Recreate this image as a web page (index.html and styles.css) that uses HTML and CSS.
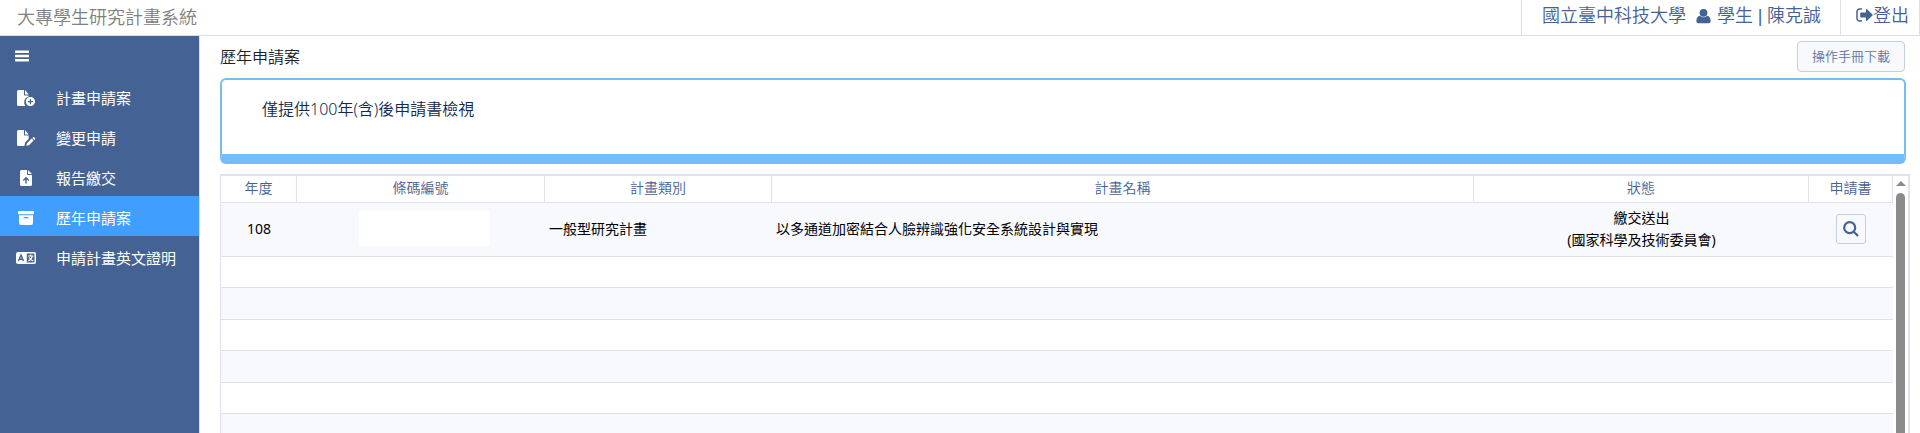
FILE: index.html
```html
<!DOCTYPE html>
<html lang="zh-Hant">
<head>
<meta charset="utf-8">
<title>大專學生研究計畫系統</title>
<link rel="stylesheet" href="styles.css">
</head>
<body>
<div class="app">
  <header class="topbar">
    <h1 class="brand">大專學生研究計畫系統</h1>
    <div class="user">
      <span>國立臺中科技大學</span>
      <svg class="user-icon" viewBox="0 0 16 16" aria-hidden="true"><circle cx="8" cy="4.6" r="4.2"/><path d="M4.2 7.8C1.6 8.2.4 10.4.4 13.2c0 1.6.9 2.4 2.2 2.4h10.800c1.300 0 2.200-.8 2.200-2.400 0-2.800-1.200-5-3.800-5.400a5.200 5.200 0 0 1-7.600 0z"/></svg>
      <span>學生 <span class="divider">|</span> 陳克誠</span>
    </div>
    <a class="logout" href="#">
      <svg class="logout-icon" viewBox="0 0 17 14" aria-hidden="true"><path class="door" d="M6 1H3.500A2.500 2.500 0 0 0 1 3.500v7A2.500 2.500 0 0 0 3.500 13H6"/><path d="M5 4.500h5V1.600c0-.6.6-.8 1-.4l5.500 5.300c.3.300.3.700 0 1L11 12.800c-.4.4-1 .2-1-.4V9.500H5c-.5 0-.8-.3-.8-.8V5.300c0-.5.3-.8.8-.8z"/></svg>
      <span>登出</span>
    </a>
  </header>
  <div class="body">
    <nav class="sidebar">
      <button class="toggle" type="button" aria-label="選單">
        <svg class="bars" viewBox="0 0 14 12" aria-hidden="true"><path d="M0 .5h14v2.500H0zM0 4.800h14v2.500H0zM0 9.100h14v2.500H0z"/></svg>
      </button>
      <a class="item" href="#">
        <svg class="item-icon" viewBox="0 0 20 16" aria-hidden="true"><path d="M2.500 0H8v4.500c0 .6.4 1 1 1h3.500v1.200A5.700 5.700 0 0 0 9.600 16H2.500A1.500 1.500 0 0 1 1 14.500v-13A1.500 1.500 0 0 1 2.500 0zM9 0l3.700 4.400H9z"/><path fill-rule="evenodd" d="M14.400 7a4.600 4.600 0 1 1 0 9.200 4.600 4.600 0 0 1 0-9.200zm-.6 2v2h-2v1.200h2v2H15v-2h2V11h-2V9z"/></svg>
        <span>計畫申請案</span>
      </a>
      <a class="item" href="#">
        <svg class="item-icon" viewBox="0 0 20 16" aria-hidden="true"><path d="M2.500 0H8v4.500c0 .6.4 1 1 1h3.700v3.200l-3.500 3.500-.8 3.800H2.500A1.500 1.500 0 0 1 1 14.500v-13A1.500 1.500 0 0 1 2.500 0zM9 0l3.700 4.400H9z"/><path d="M15.600 8.600l2 2-4.700 4.700-2.600.5.600-2.500zM16.300 7.900l.8-.7c.3-.3.7-.3 1 0l1 1c.3.300.3.700 0 1l-.8.700z"/></svg>
        <span>變更申請</span>
      </a>
      <a class="item" href="#">
        <svg class="item-icon" viewBox="0 0 20 16" aria-hidden="true"><path fill-rule="evenodd" d="M5.500 0H11v4c0 .6.4 1 1 1h4v9.500a1.500 1.500 0 0 1-1.500 1.500h-9A1.500 1.500 0 0 1 4 14.500v-13A1.500 1.500 0 0 1 5.500 0zM10 6.800L6.800 10l.9.9 1.600-1.500v4h1.400v-4l1.600 1.500.9-.9z"/><path d="M12 0l4 4h-4z"/></svg>
        <span>報告繳交</span>
      </a>
      <a class="item active" href="#" aria-current="page">
        <svg class="item-icon" viewBox="0 0 20 16" aria-hidden="true"><path d="M3 1h14a1 1 0 0 1 1 1v2.200H2V2a1 1 0 0 1 1-1z"/><path fill-rule="evenodd" d="M3 5.200h14V13a2 2 0 0 1-2 2H5a2 2 0 0 1-2-2zM7.500 7v1.200h5V7z"/></svg>
        <span>歷年申請案</span>
      </a>
      <a class="item" href="#">
        <svg class="item-icon" viewBox="0 0 20 16" aria-hidden="true"><path fill-rule="evenodd" d="M2 2h16a2 2 0 0 1 2 2v8a2 2 0 0 1-2 2H2a2 2 0 0 1-2-2V4a2 2 0 0 1 2-2zm8.800 1.400v9.200h6.700a1 1 0 0 0 1-1V4.400a1 1 0 0 0-1-1z"/><path class="cut" d="M2.500 11l2.500-6 2.500 6M3.400 9.300h3.200"/><path class="stroke" d="M12 6h5.400M14.700 4.500V6M16.300 6c-.4 2.200-2 4-4 4.900M13.200 7.500c.8 1.600 2.200 2.800 3.900 3.400"/></svg>
        <span>申請計畫英文證明</span>
      </a>
    </nav>
    <main class="content">
      <div class="heading">
        <h2 class="title">歷年申請案</h2>
        <button class="manual" type="button">操作手冊下載</button>
      </div>
      <section class="notice">僅提供100年(含)後申請書檢視</section>
      <div class="grid">
        <table class="table">
          <colgroup><col class="c-year"><col class="c-code"><col class="c-type"><col><col class="c-status"><col class="c-form"></colgroup>
          <thead>
            <tr><th>年度</th><th>條碼編號</th><th>計畫類別</th><th>計畫名稱</th><th>狀態</th><th>申請書</th></tr>
          </thead>
          <tbody>
            <tr class="record">
              <td class="center">108</td>
              <td class="code"><span class="mask"></span></td>
              <td>一般型研究計畫</td>
              <td>以多通道加密結合人臉辨識強化安全系統設計與實現</td>
              <td class="center">繳交送出<br>(國家科學及技術委員會)</td>
              <td class="center">
                <button class="view" type="button" aria-label="檢視申請書"><svg class="view-icon" viewBox="0 0 16 16" aria-hidden="true"><circle cx="6.700" cy="6.700" r="5.500"/><path d="M10.800 10.800l4.200 4.200"/></svg></button>
              </td>
            </tr>
            <tr><td colspan="6"></td></tr>
            <tr><td colspan="6"></td></tr>
            <tr><td colspan="6"></td></tr>
            <tr><td colspan="6"></td></tr>
            <tr><td colspan="6"></td></tr>
            <tr><td colspan="6"></td></tr>
          </tbody>
        </table>
        <div class="scrollbar" aria-hidden="true">
          <span class="arrow"></span>
          <span class="thumb"></span>
        </div>
      </div>
    </main>
  </div>
</div>
</body>
</html>
```
FILE: styles.css
```css
* { box-sizing: border-box; }
body {
  margin: 0;
  font-family: "Noto Sans", "Noto Sans CJK TC", sans-serif;
  font-size: 14px;
  color: #000;
  background: #fff;
}
a { color: inherit; text-decoration: none; }
button { font: inherit; padding: 0; cursor: pointer; }
svg { display: block; flex: none; fill: currentColor; }
.app { display: flex; flex-direction: column; height: 100vh; overflow: hidden; }

.topbar {
  display: flex;
  flex: none;
  height: 36px;
  border-bottom: 1px solid #dcdfe6;
  font-size: 18px;
  font-weight: 350;
  line-height: 30px;
  color: #456294;
}
.brand {
  flex: 1;
  margin: 0;
  padding: 2px 17px;
  font-size: 18px;
  font-weight: 350;
  color: #808080;
}
.user {
  display: flex;
  gap: 6px;
  padding: 0 19px 0 20px;
  border-left: 1px solid #dcdfe6;
}
.user-icon { width: 15px; height: 16px; margin: 8px 0 0 4px; }
.divider { font-family: "Liberation Sans", sans-serif; }
.logout {
  display: flex;
  padding: 0 10px 0 15px;
  border: solid #dcdfe6;
  border-width: 0 1px;
}
.logout-icon { width: 17px; height: 14px; margin-top: 8px; }
.door { fill: none; stroke: currentColor; stroke-width: 1.500; }

.body { display: flex; flex: 1; min-height: 0; }
.sidebar {
  flex: none;
  width: 200px;
  background: #456294;
  border-right: 1px solid #dcdfe6;
  color: #fff;
}
.toggle {
  display: flex;
  align-items: center;
  width: 100%;
  height: 40px;
  padding-left: 15px;
  border: 0;
  background: none;
  color: #fff;
}
.bars { width: 14px; height: 12px; }
.item {
  display: flex;
  align-items: center;
  gap: 20px;
  height: 40px;
  padding: 3px 0 0 16px;
  font-size: 15px;
  line-height: 24px;
}
.item.active { background: #409eff; }
.item-icon { width: 20px; height: 16px; }
.cut { fill: none; stroke: #456294; stroke-width: 1.400; }
.stroke { fill: none; stroke: #fff; stroke-width: 1.200; }

.content {
  display: flex;
  flex: 1;
  flex-direction: column;
  min-width: 0;
  padding: 0 10px 0 20px;
}
.heading {
  display: flex;
  align-items: center;
  justify-content: space-between;
  flex: none;
  height: 42px;
  padding: 0 5px 1px 0;
}
.title { margin: 0; font-size: 16px; font-weight: 350; line-height: 24px; color: #222; }
.manual {
  height: 31px;
  padding: 0 14px 2px;
  border: 1px solid #c3cede;
  border-radius: 4px;
  background: #f7f9fd;
  font-size: 13px;
  font-weight: 350;
  color: #60759c;
}
.notice {
  flex: none;
  height: 86px;
  margin-right: 4px;
  padding: 17px 40px;
  border: 2px solid #78bdf0;
  border-bottom: 10px solid #75bdfa;
  border-radius: 6px;
  font-size: 16px;
  font-weight: 350;
  line-height: 24px;
  color: #12294a;
}
.grid {
  display: flex;
  flex: 1;
  min-height: 0;
  margin-top: 10px;
  border: solid #dfe2ec;
  border-width: 2px 2px 0 1px;
  overflow: hidden;
}
.table {
  flex: 1;
  align-self: flex-start;
  table-layout: fixed;
  border-collapse: separate;
  border-spacing: 0;
  line-height: 22px;
}
.c-year { width: 76px; }
.c-code { width: 248px; }
.c-type { width: 227px; }
.c-status { width: 335px; }
.c-form { width: 84px; }
th {
  height: 27px;
  padding: 0 0 2px;
  border: solid #dfe2ec;
  border-width: 0 1px 1px 0;
  font-weight: 350;
  color: #456294;
}
td { height: 32px; padding: 0 4px; border-bottom: 1px solid #dfe2ec; }
tr:nth-child(even) td { height: 31px; }
tbody tr:nth-child(odd) { background: #f7f9fd; }
tbody .record td { height: 54px; padding-bottom: 2px; }
.center { text-align: center; }
tbody .record .code { padding-left: 10px; }
.mask { display: block; width: 131px; height: 35px; margin: 0 auto; background: #fff; }
.view {
  display: flex;
  align-items: center;
  justify-content: center;
  width: 30px;
  height: 30px;
  margin: 0 auto;
  border: 1px solid #c3cede;
  border-radius: 3px;
  background: #f7f9fd;
  color: #456294;
}
.view-icon { width: 16px; height: 16px; fill: none; stroke: currentColor; stroke-width: 2.200; }
.scrollbar {
  display: flex;
  flex: none;
  flex-direction: column;
  align-items: center;
  gap: 7px;
  width: 15px;
  padding-top: 5px;
}
.arrow {
  border: 5px solid transparent;
  border-top: 0;
  border-bottom-color: #8b8b8b;
}
.thumb { flex: 1; width: 9px; border-radius: 5px 5px 0 0; background: #8b8b8b; }
```
